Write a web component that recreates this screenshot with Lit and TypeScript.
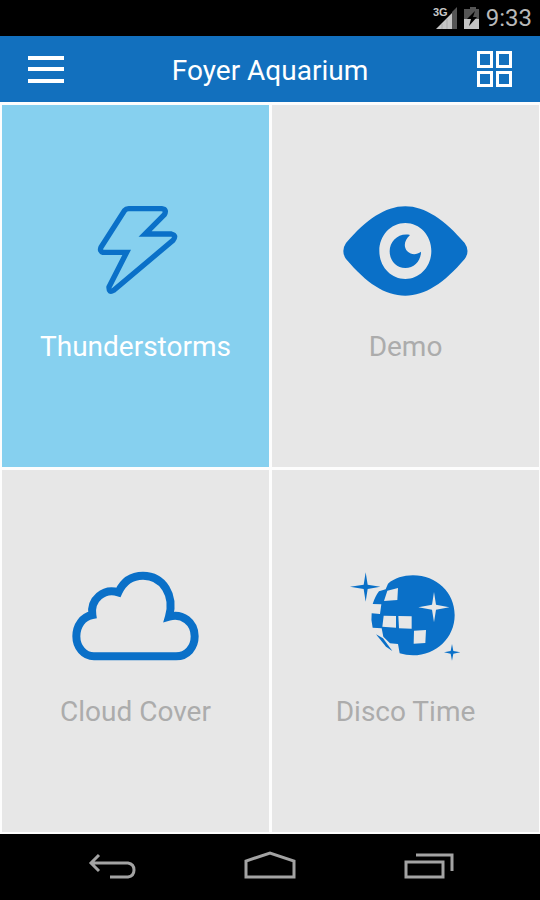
import { LitElement, html, css, svg } from "lit";
import { customElement, property, state } from "lit/decorators.js";
import { classMap } from "lit/directives/class-map.js";

interface Scene {
  name: string;
  box: string;
  art: unknown;
}

const scenes: Scene[] = [
  {
    name: "Thunderstorms",
    box: "-36 48 405 270",
    art: svg`<path class="line bolt" d="M146 56H245Q262 58 253 74L195 132H274Q291 136 279 151L101 301Q86 310 87 291L140 187H69Q58 184 63 172L134 61Q138 56 146 56Z" />`,
  },
  {
    name: "Demo",
    box: "9 33 405 270",
    art: svg`<path class="fill" fill-rule="evenodd" d="M211 34C270 34 328 74 389 144Q406 168 389 192C328 264 270 302 211 302C150 302 94 264 33 192Q17 168 33 144C94 74 150 34 211 34ZM211 84C168 84 133 121 133 168C133 215 168 252 211 252C254 252 289 215 289 168C289 121 254 84 211 84Z" />
      <path class="fill" d="M225 120C207 136 205 157 217 169C230 181 246 179 258 170C258 197 238 219 211 219C184 219 164 197 164 169C164 138 191 113 225 120Z" />`,
  },
  {
    name: "Cloud Cover",
    box: "24 33 405 270",
    art: svg`<path class="line cloud" d="M102 289C72 289 49 262 49 229C49 197 68 170 97 165C90 118 132 83 175 97C190 64 216 47 249 47C310 47 345 107 327 170C367 158 404 187 404 229C404 262 382 289 348 289Z" />`,
  },
  {
    name: "Disco Time",
    box: "-6 33 405 270",
    art: svg`<path class="fill" d="M144 71C164 54 190 46 219 46C290 46 344 98 344 165C344 233 289 286 219 286Q198 286 179 280L174 252L150 250L130 230L125 205L98 203Q92 182 95 160L120 162L124 133L98 132Q106 108 117 94L137 88Z" />
      <path class="fill" d="M108 223L129 235L157 273L138 260Z" />
      <path class="paper" d="M142 92L174 84L172 120L132 123ZM131 167L168 168V203L127 200ZM175 168L215 169V206L177 205ZM222 212L258 210L256 249L221 251Z" />
      <path class="paper" d="M282 96L288 134L328 142L288 149L282 187L276 149L235 142L276 134Z" />
      <path class="fill" d="M77 37L83 74L121 80L83 87L77 125L71 87L30 80L71 74ZM336 252L340 273L361 277L340 281L336 302L332 281L312 277L332 273Z" />`,
  },
];

@customElement("scene-tile")
class SceneTile extends LitElement {
  @property({ attribute: false }) scene!: Scene;
  @property({ type: Boolean }) selected = false;

  static styles = css`
    :host {
      display: grid;
    }
    .tile {
      display: flex;
      flex-direction: column;
      align-items: center;
      justify-content: center;
      gap: 33px;
      border: 0;
      padding: 0 0 1px;
      margin: 0;
      font: 28px/36px Roboto, "Noto Sans", sans-serif;
      color: #acacac;
      background: #e7e7e7;
      cursor: pointer;
    }
    .selected {
      color: #fff;
      background: #86d0ef;
    }
    .art {
      display: block;
      width: 135px;
      height: 90px;
    }
    .fill {
      fill: #0a70c8;
    }
    .paper {
      fill: #e7e7e7;
    }
    .line {
      fill: none;
      stroke: #0a70c8;
    }
    .bolt {
      stroke-width: 16;
    }
    .cloud {
      stroke-width: 24;
    }
  `;

  render() {
    return html`<button
      class=${classMap({ tile: true, selected: this.selected })}
      aria-pressed=${this.selected ? "true" : "false"}
    >
      <svg class="art" viewBox=${this.scene.box} aria-hidden="true">${this.scene.art}</svg>
      <span>${this.scene.name}</span>
    </button>`;
  }
}

@customElement("app-root")
class AppRoot extends LitElement {
  @state() private current = 0;

  static styles = css`
    :host {
      display: flex;
      flex-direction: column;
      min-height: 100vh;
      background: #fdfdfd;
      font-family: Roboto, "Noto Sans", sans-serif;
    }
    svg {
      display: block;
    }
    button {
      border: 0;
      margin: 0;
      padding: 0;
      background: none;
      cursor: pointer;
    }
    .status {
      display: flex;
      align-items: center;
      justify-content: flex-end;
      gap: 6px;
      height: 36px;
      padding-right: 8px;
      background: #000;
      color: #b9b9b9;
      font-size: 24px;
      line-height: 36px;
    }
    .net {
      font: bold 11px "Liberation Sans", sans-serif;
      fill: #c8c8c8;
    }
    .bar {
      display: flex;
      align-items: center;
      justify-content: space-between;
      height: 66px;
      padding: 0 27px;
      background: #1270be;
      color: #fff;
    }
    .title {
      margin: 0;
      padding-top: 4px;
      font-size: 28px;
      font-weight: 400;
      line-height: 36px;
    }
    .scenes {
      flex: 1;
      display: grid;
      grid-template-columns: 1fr 1fr;
      grid-auto-rows: 1fr;
      gap: 3px;
      padding: 3px 1px 2px 2px;
    }
    .nav {
      display: flex;
      height: 66px;
      padding: 0 6%;
      background: #000;
    }
    .key {
      flex: 1;
      display: flex;
      align-items: center;
      justify-content: center;
    }
    .stroke {
      fill: none;
      stroke: #a3a3a3;
      stroke-width: 3;
    }
  `;

  render() {
    return html`
      <div class="status">
        <svg width="48" height="24" viewBox="0 0 48 24" role="img" aria-label="3G signal, battery charging">
          <path fill="#555" d="M20 6L25 1V23H20Z" />
          <path fill="#c4c4c4" d="M4 23L20 7V23Z" />
          <path stroke="#aaa" d="M10 18V23M15 13V23" />
          <text class="net" x="1" y="10">3G</text>
          <path fill="#555" d="M35 3H38V1H44V3H47V13H32V3Z" />
          <path fill="#c4c4c4" d="M32 13H47V23H32Z" />
          <path fill="#000" d="M43 5L35 13H39L37 20L45 11H41Z" />
        </svg>
        <span>9:33</span>
      </div>
      <header class="bar">
        <button aria-label="Menu">
          <svg width="38" height="38" viewBox="0 0 38 38">
            <path fill="#fff" d="M1 6H37V10H1ZM1 17H37V21H1ZM1 29H37V33H1Z" />
          </svg>
        </button>
        <h1 class="title">Foyer Aquarium</h1>
        <button aria-label="Grid view">
          <svg width="38" height="38" viewBox="0 0 76 76">
            <path
              fill="none"
              stroke="#fff"
              stroke-width="6"
              d="M7 5H33V33H7ZM45 5H71V33H45ZM7 45H33V71H7ZM45 45H71V71H45Z"
            />
          </svg>
        </button>
      </header>
      <main class="scenes">
        ${scenes.map(
          (scene, i) => html`<scene-tile
            .scene=${scene}
            ?selected=${i === this.current}
            @click=${() => (this.current = i)}
          ></scene-tile>`
        )}
      </main>
      <nav class="nav">
        <button class="key" aria-label="Back">
          <svg width="52" height="36" viewBox="0 0 52 36">
            <path class="stroke" d="M13 6L5 14L13 22M5 14H42Q48 15 48 21Q48 27 42 28H24" />
          </svg>
        </button>
        <button class="key" aria-label="Home">
          <svg width="52" height="36" viewBox="0 0 52 36">
            <path class="stroke" d="M2 28V12L26 4L50 12V28Z" />
          </svg>
        </button>
        <button class="key" aria-label="Recent apps">
          <svg width="52" height="36" viewBox="0 0 52 36">
            <path class="stroke" d="M4 13H41V28H4ZM14 6H50V22" />
          </svg>
        </button>
      </nav>
    `;
  }
}
